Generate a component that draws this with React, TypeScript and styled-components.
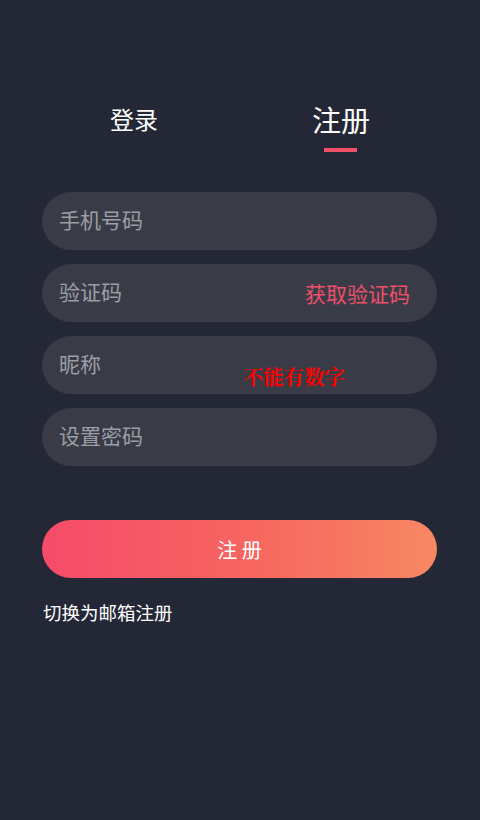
import React from "react";
import styled, { createGlobalStyle } from "styled-components";

const Global = createGlobalStyle`
  html, body {
    margin: 0;
    padding: 0;
    background: #242836;
  }
  body {
    font-family: "Noto Sans CJK SC", "Noto Sans", sans-serif;
  }
`;

const Page = styled.div`
  width: 480px;
  min-height: 820px;
  background: #242836;
  padding-top: 99px;
  box-sizing: border-box;
`;

const Tabs = styled.div`
  display: flex;
  justify-content: space-around;
  width: 414px;
  margin-left: 33px;
`;

const Tab = styled.div`
  display: flex;
  flex-direction: column;
  align-items: center;
`;

const TabLabel = styled.span<{ $active?: boolean }>`
  height: 40px;
  line-height: 40px;
  font-size: ${(p) => (p.$active ? "29px" : "24px")};
  color: #ffffff;
`;

const Indicator = styled.span<{ $active?: boolean }>`
  margin-top: 9px;
  width: 33px;
  height: 4px;
  background: ${(p) => (p.$active ? "#f0506a" : "transparent")};
`;

const Form = styled.div`
  display: flex;
  flex-direction: column;
  gap: 14px;
  margin: 40px 43px 0 42px;
`;

const Field = styled.div`
  position: relative;
  display: flex;
  align-items: center;
  justify-content: space-between;
  height: 58px;
  border-radius: 29px;
  background: #393c47;
  padding: 0 27px 0 17px;
`;

const Placeholder = styled.span`
  font-size: 21px;
  color: #9c9ea5;
  line-height: 1;
  margin-top: -4px;
`;

const CodeLink = styled.span`
  font-size: 21px;
  color: #ef4f69;
  line-height: 1;
  margin-top: 0;
`;

const ErrorHint = styled.span`
  position: absolute;
  left: 201px;
  top: 32px;
  font-family: "Liberation Serif", "Noto Serif CJK SC", serif;
  font-weight: bold;
  font-size: 20.4px;
  line-height: 1;
  color: #ff0000;
`;

const SubmitButton = styled.button`
  margin: 54px 43px 0 42px;
  width: 395px;
  height: 58px;
  border: none;
  border-radius: 29px;
  background: linear-gradient(90deg, #f64b6a 0%, #f7675f 55%, #f78862 100%);
  color: #ffffff;
  font-family: "Noto Sans CJK SC", sans-serif;
  font-size: 20px;
  display: block;
  padding: 0;
`;

const SwitchLink = styled.div`
  margin: 21px 0 0 43px;
  font-size: 18.5px;
  line-height: 26px;
  color: #ffffff;
`;

export default function App() {
  return (
    <>
      <Global />
      <Page>
        <Tabs>
          <Tab>
            <TabLabel>登录</TabLabel>
            <Indicator />
          </Tab>
          <Tab>
            <TabLabel $active>注册</TabLabel>
            <Indicator $active />
          </Tab>
        </Tabs>
        <Form>
          <Field>
            <Placeholder>手机号码</Placeholder>
          </Field>
          <Field>
            <Placeholder>验证码</Placeholder>
            <CodeLink>获取验证码</CodeLink>
          </Field>
          <Field>
            <Placeholder>昵称</Placeholder>
            <ErrorHint>不能有数字</ErrorHint>
          </Field>
          <Field>
            <Placeholder>设置密码</Placeholder>
          </Field>
        </Form>
        <SubmitButton>注 册</SubmitButton>
        <SwitchLink>切换为邮箱注册</SwitchLink>
      </Page>
    </>
  );
}
